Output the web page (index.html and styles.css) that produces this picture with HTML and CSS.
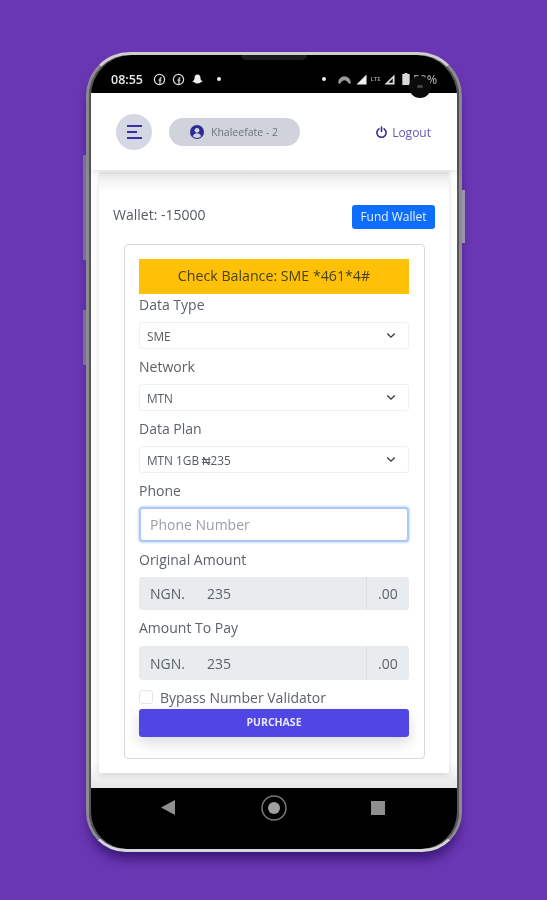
FILE: index.html
```html
<!DOCTYPE html>
<html lang="en">
<head>
  <meta charset="UTF-8">
  <title>Buy Data</title>
  <link rel="stylesheet" href="styles.css">
</head>

<body>
<div class="phone">
  <span class="side-btn side-a"></span>
  <span class="side-btn side-b"></span>
  <span class="side-btn side-c"></span>
  <span class="camera"><i></i></span>
  <span class="speaker"></span>

  <div class="statusbar">
    <div class="status-group">
      <span class="time">08:55</span>
      <svg class="st-icon" viewBox="0 0 14 14"><circle cx="7" cy="7" r="5.5" fill="none" stroke="#ddd" stroke-width="1.3"/><path d="M7.5 12V6.5c0-1 .5-1.6 1.6-1.6M6 7.6h3" fill="none" stroke="#ddd" stroke-width="1.3"/></svg>
      <svg class="st-icon" viewBox="0 0 14 14"><circle cx="7" cy="7" r="5.5" fill="none" stroke="#ddd" stroke-width="1.3"/><path d="M7.5 12V6.5c0-1 .5-1.6 1.6-1.6M6 7.6h3" fill="none" stroke="#ddd" stroke-width="1.3"/></svg>
      <svg class="st-icon" viewBox="0 0 14 14"><path d="M7 1.5c2.200 0 3.200 1.700 3.200 3.500 0 1.800.6 3 2.300 3.900-.4.800-1.400.7-2 1.100-.5.500-.8 1.200-3.500 1.200s-3-.7-3.500-1.200c-.6-.4-1.600-.3-2-1.100C3.200 8 3.800 6.800 3.800 5 3.800 3.200 4.800 1.500 7 1.500z" fill="#eee"/></svg>
      <span class="dot"></span>
    </div>
    <div class="status-group status-right">
      <span class="dot"></span>
      <svg class="st-wifi" viewBox="0 0 14 12"><path d="M0 9.500a7 7 0 0 1 14 0l-1.500 1.500-3-3a3.500 3.500 0 0 0-5 0l-3 3z" fill="#9a9a9a"/></svg>
      <svg class="st-sig" viewBox="0 0 12 12"><path d="M11.500.5v11H.5z" fill="#eee"/></svg>
      <span class="lte">LTE</span>
      <svg class="st-sig" viewBox="0 0 12 12"><path d="M11.500.5v11H.5zM9.500 5L5 9.500h4.500z" fill="#ddd" fill-rule="evenodd"/></svg>
      <svg class="st-bat" viewBox="0 0 8 13"><path d="M2.500 0h3v1.200H8V13H0V1.200h2.500z" fill="#d8d8d8"/></svg>
      <span class="pct">58%</span>
    </div>
  </div>

  <div class="screen">
    <header class="topbar">
      <button class="menu-btn">
        <span class="bar"></span>
        <span class="bar bar-short"></span>
        <span class="bar"></span>
      </button>
      <div class="user-pill">
        <svg class="avatar" viewBox="0 0 14 14"><circle cx="7" cy="7" r="7" fill="#2e2a93"/><circle cx="7" cy="5.300" r="2.400" fill="#d0d3dc"/><path d="M2.800 11.200c.6-2 2.400-3 4.200-3s3.600 1 4.200 3a6 6 0 0 1-8.400 0z" fill="#d0d3dc"/></svg>
        <span>Khaleefate - 2</span>
      </div>
      <a class="logout">
        <svg viewBox="0 0 14 14"><path d="M4.200 3a5 5 0 1 0 5.600 0" fill="none" stroke="#2e2a93" stroke-width="1.700" stroke-linecap="round"/><path d="M7 1v5" stroke="#2e2a93" stroke-width="1.700" stroke-linecap="round"/></svg>
        <span>Logout</span>
      </a>
    </header>

    <main class="card">
      <div class="wallet-row">
        <span class="wallet">Wallet: -15000</span>
        <button class="fund-btn">Fund Wallet</button>
      </div>

      <form class="form-box">
        <div class="notice">Check Balance: SME *461*4#</div>

        <label class="lbl">Data Type</label>
        <div class="select">
          <span>SME</span>
          <svg viewBox="0 0 12 8"><path d="M1.500 1.500L6 6l4.500-4.500" fill="none" stroke="#343a40" stroke-width="1.600"/></svg>
        </div>

        <label class="lbl">Network</label>
        <div class="select">
          <span>MTN</span>
          <svg viewBox="0 0 12 8"><path d="M1.500 1.500L6 6l4.500-4.500" fill="none" stroke="#343a40" stroke-width="1.600"/></svg>
        </div>

        <label class="lbl">Data Plan</label>
        <div class="select">
          <span>MTN 1GB ₦235</span>
          <svg viewBox="0 0 12 8"><path d="M1.500 1.500L6 6l4.500-4.500" fill="none" stroke="#343a40" stroke-width="1.600"/></svg>
        </div>

        <label class="lbl lbl-phone">Phone</label>
        <input class="phone-input" type="text" placeholder="Phone Number">

        <label class="lbl">Original Amount</label>
        <div class="amount">
          <span class="prefix">NGN.</span>
          <span class="value">235</span>
          <span class="suffix">.00</span>
        </div>

        <label class="lbl lbl-pay">Amount To Pay</label>
        <div class="amount amount-pay">
          <span class="prefix">NGN.</span>
          <span class="value">235</span>
          <span class="suffix">.00</span>
        </div>

        <div class="check-row">
          <span class="check"></span>
          <span>Bypass Number Validator</span>
        </div>
        <button class="buy-btn" type="button">PURCHASE</button>
      </form>
    </main>
  </div>

  <nav class="navbar">
    <svg class="nav-back" viewBox="0 0 14 15"><path d="M14 0v15L0 7.500z" fill="#8f8f8f"/></svg>
    <svg class="nav-home" viewBox="0 0 26 26"><circle cx="13" cy="13" r="12" fill="none" stroke="#777" stroke-width="1.500"/><circle cx="13" cy="13" r="6" fill="#a0a0a0"/></svg>
    <span class="nav-recent"></span>
  </nav>
</div>
</body>

</html>
```
FILE: styles.css
```css
* {
    box-sizing: border-box;
    font-family: "Open Sans", sans-serif;
}
html, body {
    margin: 0;
    height: 100%;
}
body {
    background-color: #6a37b4;
    padding: 52px 0 0 86px;
    overflow: hidden;
}
.phone {
    position: relative;
    display: flex;
    flex-direction: column;
    width: 376px;
    height: 800px;
    padding: 0 2px;
    background-color: #000;
    border: 3px solid #8c8c90;
    border-top-color: #cfcdd0;
    border-bottom-color: #d8d6d8;
    border-radius: 44px 44px 40px 40px;
    box-shadow: 0 10px 12px -3px rgba(45, 15, 100, .8), inset 2px 0 0 #55555a, inset -2px 0 0 #55555a;
    filter: blur(.4px);
}
.side-btn {
    position: absolute;
    width: 3px;
    background-color: #77709a;
}
.side-a { left: -6px; top: 100px; height: 105px; }
.side-b { left: -6px; top: 255px; height: 55px; }
.side-c { right: -6px; top: 135px; height: 53px; background-color: #9a93ad; }
.speaker {
    position: absolute;
    top: 0;
    left: 152px;
    width: 66px;
    height: 5px;
    background-color: #1c1c1c;
    border-radius: 0 0 6px 6px;
}
.camera {
    position: absolute;
    top: 21px;
    right: 28px;
    width: 22px;
    height: 22px;
    background-color: #0b0b0b;
    border-radius: 50%;
    z-index: 2;
}
.camera i {
    display: block;
    width: 6px;
    height: 3px;
    margin: 9px auto 0;
    background-color: #444;
    border-radius: 2px;
}

/* status bar */
.statusbar {
    display: flex;
    justify-content: space-between;
    align-items: center;
    height: 38px;
    padding: 10px 21px 0 20px;
    flex-shrink: 0;
}
.status-group {
    display: flex;
    align-items: center;
    gap: 6px;
}
.status-right {
    gap: 3px;
}
.time {
    margin-right: 4px;
    color: #e8e8e8;
    font-size: 12.500px;
    font-weight: 600;
}
.st-icon {
    width: 13px;
    height: 13px;
}
.st-wifi {
    width: 13px;
    height: 11px;
    margin-right: 2px;
}
.st-sig {
    width: 11px;
    height: 11px;
}
.st-bat {
    width: 8px;
    height: 12px;
    margin-left: 4px;
}
.dot {
    width: 4px;
    height: 4px;
    margin-left: 7px;
    background-color: #eee;
    border-radius: 50%;
}
.status-right .dot {
    margin: 0 9px 0 0;
}
.lte {
    width: 11px;
    color: #888;
    font-size: 6px;
    font-weight: 700;
    text-align: center;
}
.pct {
    width: 23px;
    color: #999;
    font-size: 12px;
    font-weight: 600;
}

/* screen */
.screen {
    display: flex;
    flex-direction: column;
    flex: 1;
    background: linear-gradient(#fff, #fff 96%, #e6e6e6);
}
.topbar {
    display: flex;
    align-items: center;
    height: 77px;
    padding: 1px 26px 0 25px;
    background-color: #fff;
    box-shadow: 0 2px 6px rgba(0, 0, 0, .12);
    flex-shrink: 0;
    position: relative;
}
.menu-btn {
    display: flex;
    flex-direction: column;
    justify-content: center;
    align-items: flex-start;
    gap: 4px;
    width: 36px;
    height: 36px;
    padding: 0 0 0 11px;
    background-color: #d5d8e3;
    border: 0;
    border-radius: 50%;
}
.bar {
    width: 15px;
    height: 2px;
    background-color: #3a2fa6;
}
.bar-short {
    width: 10px;
}
.user-pill {
    display: flex;
    align-items: center;
    gap: 7px;
    width: 131px;
    height: 28px;
    margin-left: 17px;
    padding-left: 21px;
    background-color: #d0d3dc;
    border-radius: 14px;
    color: #6c7280;
    font-size: 10.500px;
}
.avatar {
    width: 14px;
    height: 14px;
}
.logout {
    display: flex;
    align-items: center;
    gap: 4px;
    margin-left: auto;
    color: #6259b8;
    font-size: 12px;
}
.logout svg {
    width: 13px;
    height: 13px;
}
.card {
    flex: 1;
    margin: 2px 8px 15px;
    padding: 33px 14px 0;
    background: linear-gradient(#e9e9e9, #fff 20px);
    box-shadow: 0 2px 6px rgba(0, 0, 0, .12);
}
.wallet-row {
    display: flex;
    justify-content: space-between;
    align-items: flex-start;
    height: 24px;
}
.wallet {
    color: #555b61;
    font-size: 14px;
    line-height: 20px;
}
.fund-btn {
    height: 24px;
    width: 83px;
    padding: 0 0 2px;
    background-color: #0d6efd;
    border: 0;
    border-radius: 3px;
    color: #e6f0ff;
    font-size: 12px;
}
.form-box {
    margin: 15px 10px 0 11px;
    padding: 14px 15px 21px 14px;
    background-color: #fff;
    border: 1px solid #d6d8da;
    border-radius: 4px;
}
.notice {
    height: 35px;
    background-color: #ffc107;
    color: #4a4214;
    font-size: 14.200px;
    line-height: 34px;
    text-align: center;
}
.lbl {
    display: block;
    height: 20px;
    margin-bottom: 8px;
    color: #5c6268;
    font-size: 14px;
    line-height: 21px;
}
.lbl-phone {
    margin-bottom: 7px;
}
.lbl-pay {
    margin-bottom: 9px;
}
.select {
    display: flex;
    justify-content: space-between;
    align-items: center;
    height: 27px;
    margin-bottom: 7px;
    padding: 0 12px 0 7px;
    border: 1px solid #eef0f2;
    border-radius: 3px;
    color: #555b61;
    font-size: 11.800px;
}
.select svg {
    width: 10px;
    height: 7px;
}
.phone-input {
    display: block;
    width: 100%;
    height: 35px;
    margin-bottom: 7px;
    padding: 0 9px;
    border: 2px solid #a9c9f7;
    border-radius: 4px;
    box-shadow: 0 0 0 1.500px #dbe8fb;
    color: #555b61;
    font-size: 14px;
    outline: 0;
}
.phone-input::placeholder {
    color: #9a9fa5;
}
.amount {
    display: flex;
    align-items: center;
    height: 33px;
    margin-bottom: 7px;
    background-color: #e9ecef;
    border-radius: 3px;
    color: #5c6268;
    font-size: 14px;
}
.amount-pay {
    height: 34px;
}
.prefix {
    width: 58px;
    padding-left: 11px;
}
.value {
    flex: 1;
    padding-left: 10px;
}
.suffix {
    display: flex;
    align-items: center;
    width: 43px;
    height: 100%;
    padding-left: 11px;
    border-left: 1px solid #dcdfe2;
}
.check-row {
    display: flex;
    align-items: center;
    gap: 7px;
    height: 20px;
    color: #5c6268;
    font-size: 14px;
}
.check {
    width: 14px;
    height: 14px;
    border: 1px solid #e4e6e8;
    border-radius: 3px;
}
.buy-btn {
    display: block;
    width: 100%;
    height: 28px;
    margin-top: 2px;
    padding: 0 0 2px;
    background-color: #4f46e5;
    border: 0;
    border-radius: 3px;
    box-shadow: 0 6px 14px rgba(0, 0, 0, .14);
    color: #e8e6ff;
    font-size: 10.500px;
    font-weight: 700;
}

/* android nav bar */
.navbar {
    display: flex;
    align-items: center;
    height: 61px;
    padding: 0 0 22px 70px;
    flex-shrink: 0;
}
.nav-back {
    width: 14px;
    height: 15px;
}
.nav-home {
    width: 26px;
    height: 26px;
    margin-left: 86px;
}
.nav-recent {
    width: 14px;
    height: 14px;
    margin-left: 84px;
    background-color: #8f8f8f;
}
```
